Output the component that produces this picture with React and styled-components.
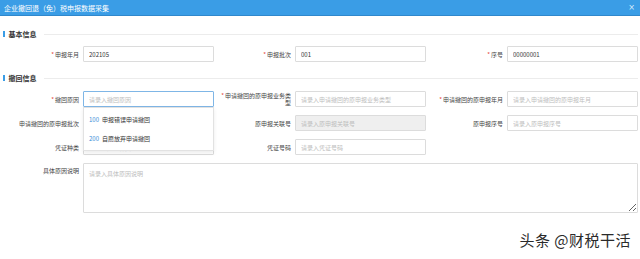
import React from 'react';
import styled, { createGlobalStyle } from 'styled-components';

const GlobalStyle = createGlobalStyle`
  html, body {
    margin: 0;
    padding: 0;
    background: #fff;
  }
  body {
    font-family: "Noto Sans CJK SC", "Noto Sans", sans-serif;
    color: #333;
  }
`;

const Page = styled.div`
  position: relative;
  width: 640px;
  height: 259px;
  overflow: hidden;
  background: #fff;
`;

const TitleBar = styled.div`
  display: flex;
  align-items: center;
  justify-content: space-between;
  height: 15px;
  padding: 0 5px 0 4px;
  background: #3a9de6;
  border-bottom: 1px solid #3088cc;
  color: #fff;
  font-size: 7px;
`;

const Close = styled.span`
  font-family: "DejaVu Sans", sans-serif;
  font-size: 8px;
  color: #d8ecfb;
`;

const Body = styled.div`
  padding: 0 2px 0 3px;
`;

const SectionHeader = styled.div`
  display: flex;
  align-items: center;
  height: 14px;
  margin-top: ${(p) => p.$top}px;
  margin-bottom: ${(p) => p.$bottom}px;
  font-size: 7px;
  font-weight: 600;
  color: #333;

  &::before {
    content: '';
    width: 1.5px;
    height: 6px;
    margin-right: 4px;
    background: #3a9de6;
  }

  &::after {
    content: '';
    flex: 1;
    height: 1px;
    margin-left: 7px;
    background: #ececec;
  }
`;

const Grid = styled.div`
  display: grid;
  grid-template-columns: repeat(3, 212px);
  row-gap: 8px;
  margin-left: -1px;
`;

const Field = styled.div`
  position: relative;
  display: flex;
  align-items: ${(p) => (p.$top ? 'flex-start' : 'center')};
  grid-column: ${(p) => (p.$wide ? '1 / -1' : 'auto')};
  z-index: ${(p) => (p.$raised ? 2 : 'auto')};
`;

const Label = styled.label`
  flex: 0 0 81px;
  box-sizing: border-box;
  padding: ${(p) => (p.$top ? '4px' : '0')} 4px 0 6px;
  text-align: right;
  font-size: 6px;
  line-height: 7px;
  color: #444;
`;

const Star = styled.span`
  color: #e5453b;
  margin-right: 1px;
`;

const Input = styled.input`
  flex: 1;
  min-width: 0;
  box-sizing: border-box;
  height: 16px;
  padding: 0 5px;
  border: 1px solid ${(p) => (p.$focus ? '#7fb6e6' : '#dcdcdc')};
  border-radius: 1px;
  background: ${(p) => (p.disabled ? '#efefef' : '#fff')};
  font-family: "Noto Sans CJK SC", "Noto Sans", sans-serif;
  font-size: 6px;
  color: #333;
  outline: none;

  &::placeholder {
    color: #bdbdbd;
  }
`;

const TextArea = styled.textarea`
  flex: 1;
  box-sizing: border-box;
  height: 50px;
  padding: 5px;
  border: 1px solid #dcdcdc;
  border-radius: 1px;
  font-family: "Noto Sans CJK SC", "Noto Sans", sans-serif;
  font-size: 6px;
  color: #333;
  outline: none;

  &::placeholder {
    color: #bdbdbd;
  }
`;

const Menu = styled.ul`
  position: absolute;
  top: 100%;
  left: 81px;
  right: 0;
  margin: 0;
  padding: 2px 0;
  list-style: none;
  background: #fff;
  border: 1px solid #e2e2e2;
  box-shadow: 0 2px 4px rgba(0, 0, 0, 0.08);
`;

const MenuItem = styled.li`
  height: 19px;
  display: flex;
  align-items: center;
  gap: 3px;
  padding-left: 5px;
  font-size: 6px;
  color: #333;
`;

const Code = styled.span`
  color: #3a8fd8;
`;

const Watermark = styled.div`
  position: absolute;
  right: 9px;
  top: 229px;
  font-family: "Noto Sans CJK SC", sans-serif;
  font-size: 15px;
  color: #2a2a2a;
  letter-spacing: 0.5px;
  text-shadow: 0 0 2px #fff, 0 0 2px #fff;
`;

const reasons = [
  { code: '100', text: '申报错误申请撤回' },
  { code: '200', text: '自愿放弃申请撤回' },
];

export default function App() {
  return (
    <Page>
      <GlobalStyle />
      <TitleBar>
        <span>企业撤回退（免）税申报数据采集</span>
        <Close>×</Close>
      </TitleBar>
      <Body>
        <SectionHeader $top={11} $bottom={5}>基本信息</SectionHeader>
        <Grid>
          <Field>
            <Label><Star>*</Star>申报年月</Label>
            <Input defaultValue="202105" />
          </Field>
          <Field>
            <Label><Star>*</Star>申报批次</Label>
            <Input defaultValue="001" />
          </Field>
          <Field>
            <Label><Star>*</Star>序号</Label>
            <Input defaultValue="00000001" />
          </Field>
        </Grid>

        <SectionHeader $top={9} $bottom={6}>撤回信息</SectionHeader>
        <Grid>
          <Field $raised>
            <Label><Star>*</Star>撤回原因</Label>
            <Input $focus placeholder="请录入撤回原因" />
            <Menu>
              {reasons.map((r) => (
                <MenuItem key={r.code}>
                  <Code>{r.code}</Code>
                  {r.text}
                </MenuItem>
              ))}
            </Menu>
          </Field>
          <Field>
            <Label><Star>*</Star>申请撤回的原申报业务类型</Label>
            <Input placeholder="请录入申请撤回的原申报业务类型" />
          </Field>
          <Field>
            <Label><Star>*</Star>申请撤回的原申报年月</Label>
            <Input placeholder="请录入申请撤回的原申报年月" />
          </Field>

          <Field>
            <Label>申请撤回的原申报批次</Label>
            <Input placeholder="请录入申请撤回的原申报批次" />
          </Field>
          <Field>
            <Label>原申报关联号</Label>
            <Input disabled placeholder="请录入原申报关联号" />
          </Field>
          <Field>
            <Label>原申报序号</Label>
            <Input placeholder="请录入原申报序号" />
          </Field>

          <Field>
            <Label>凭证种类</Label>
            <Input placeholder="请录入凭证种类" />
          </Field>
          <Field>
            <Label>凭证号码</Label>
            <Input placeholder="请录入凭证号码" />
          </Field>
          <div />

          <Field $wide $top>
            <Label $top>具体原因说明</Label>
            <TextArea placeholder="请录入具体原因说明" />
          </Field>
        </Grid>
      </Body>
      <Watermark>头条 @财税干活</Watermark>
    </Page>
  );
}
